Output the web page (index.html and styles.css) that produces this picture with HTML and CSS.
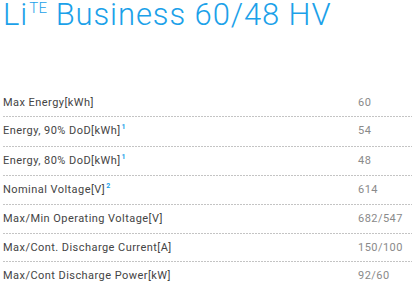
FILE: index.html
```html
<!DOCTYPE html>
<html>
<head>
<meta charset="utf-8">
<link rel="stylesheet" href="styles.css">
</head>
<body>
<div class="page">
  <h1 class="title">Li<sup class="title-sup">TE</sup> Business 60/48 HV</h1>
  <div class="specs">
    <div class="row"><span class="label">Max Energy[kWh]</span><span class="value">60</span></div>
    <div class="row"><span class="label">Energy, 90% DoD[kWh]<sup class="note">1</sup></span><span class="value">54</span></div>
    <div class="row"><span class="label">Energy, 80% DoD[kWh]<sup class="note">1</sup></span><span class="value">48</span></div>
    <div class="row"><span class="label">Nominal Voltage[V]<sup class="note">2</sup></span><span class="value">614</span></div>
    <div class="row"><span class="label">Max/Min Operating Voltage[V]</span><span class="value">682/547</span></div>
    <div class="row"><span class="label">Max/Cont. Discharge Current[A]</span><span class="value">150/100</span></div>
    <div class="row"><span class="label">Max/Cont Discharge Power[kW]</span><span class="value">92/60</span></div>
  </div>
</div>
</body>
</html>
```
FILE: styles.css
```css
html, body {
  margin: 0;
  padding: 0;
  background: #ffffff;
}
.page {
  padding: 0 0 0 3px;
  font-family: Roboto, "Liberation Sans", sans-serif;
}
.title {
  margin: 0;
  font-weight: 300;
  font-size: 31px;
  line-height: 29.6px;
  letter-spacing: 0.9px;
  color: #1ba1e9;
  height: 89px;
}
.title-sup {
  font-size: 15px;
  line-height: 15px;
  letter-spacing: 0.3px;
  vertical-align: 0;
  position: relative;
  top: -12px;
  margin-left: 1px;
}
.specs {
  display: flex;
  flex-direction: column;
}
.row {
  display: grid;
  grid-template-columns: 355px 1fr;
  line-height: 26.33px;
  padding-top: 1px;
  font-size: 11px;
  letter-spacing: 0.45px;
  background-image: linear-gradient(to right, #c4c4c4 0 2px, transparent 2px 3px);
  background-size: 3px 1px;
  background-repeat: repeat-x;
  background-position: 0 100%;
  padding-bottom: 1px;
}
.row:last-child {
  background: none;
}
.label {
  color: #444444;
}
.value {
  color: #8a8a8a;
}
.note {
  font-size: 7px;
  font-weight: 700;
  color: #1ba1e9;
  vertical-align: 0;
  position: relative;
  top: -5px;
  margin-left: 1px;
}
```
